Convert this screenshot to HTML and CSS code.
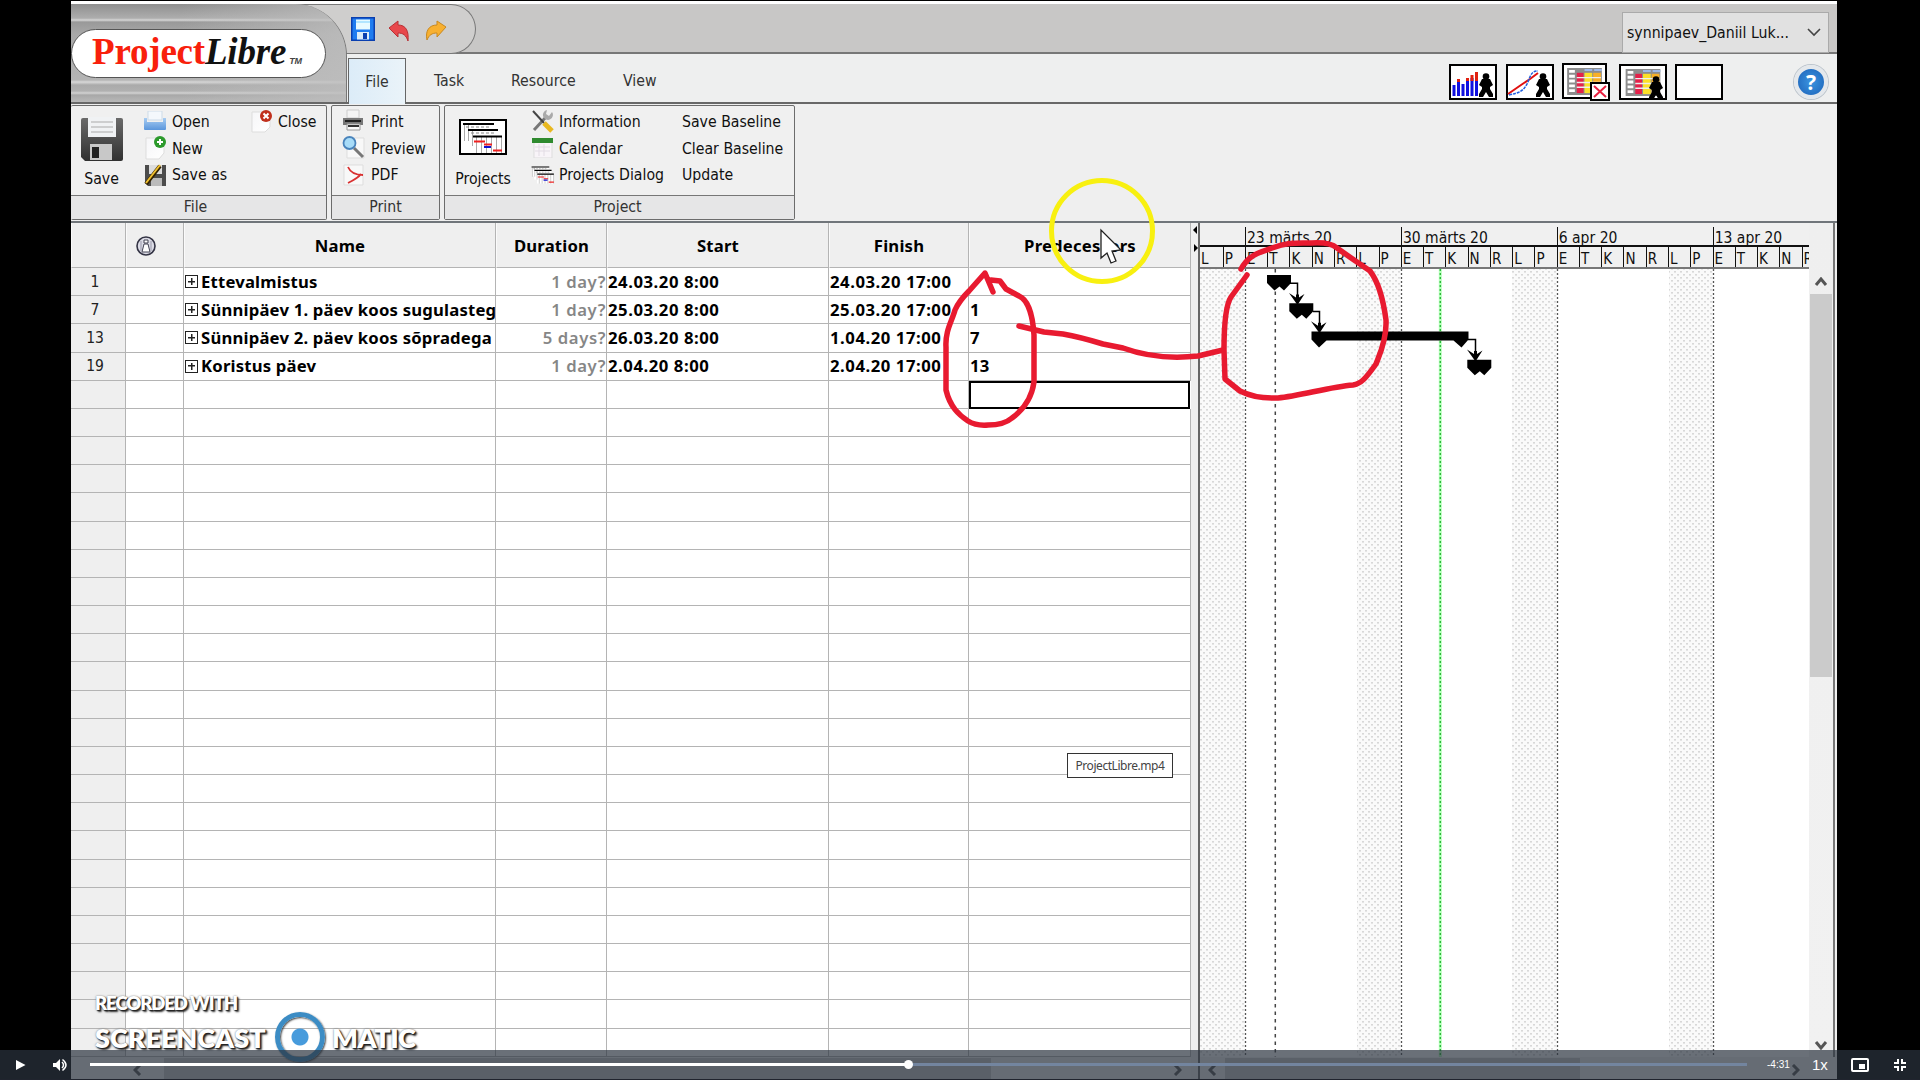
FILE: index.html
```html
<!DOCTYPE html>
<html lang="en">
<head>
<meta charset="utf-8">
<title>ProjectLibre.mp4</title>
<link rel="stylesheet" href="styles.css">
</head>
<body>
<svg width="0" height="0" class="defs">
  <defs>
    <linearGradient id="blue" x2="0" y2="1"><stop offset="0" stop-color="#a9cdf2"/><stop offset="1" stop-color="#5b96dc"/></linearGradient>
    <linearGradient id="dark" x2="0" y2="1"><stop offset="0" stop-color="#6a6a6a"/><stop offset="1" stop-color="#303030"/></linearGradient>
    <linearGradient id="paper" x2="1" y2="1"><stop offset="0" stop-color="#f6f6f8"/><stop offset="1" stop-color="#fff"/></linearGradient>
    <pattern id="dots" width="6" height="6" patternUnits="userSpaceOnUse"><rect width="6" height="6" fill="#fafafa"/><rect width="2" height="1.6" fill="#d8d8d8"/><rect x="3" y="3" width="2" height="1.6" fill="#d8d8d8"/></pattern>
    <symbol id="person" viewBox="0 0 14 24"><circle cx="7" cy="3.5" r="3.3"/><path d="M3 6h8l3 6-3 2v2l3 5v3h-4l-3-5-3 5H0v-3l3-5v-2l-3-2z"/></symbol>
    <symbol id="gantt" viewBox="0 0 48 36"><path d="M4.500 6v15h4v6h5v7h29V18h-4v-6h-4V6z" fill="#fff"/><g fill="none" stroke="#aaa"><path d="M5.500 6v16M9.500 6v16M13.500 12v15M17.500 18v16M22.500 18v16M27.500 18v16M32.500 18v16M37.500 18v16M42.500 18v16"/></g><path d="M4 5h31M9 11h30M14 17.500h29" stroke="#000" stroke-width="2"/><path d="M7 8h25M12 14h24" stroke="#888" stroke-dasharray="3 2"/><path d="M15 22.500h11M25 25.500h8M34 31.500h9" stroke="#f02020" stroke-width="2"/><path d="M25 28h7" stroke="#1010d0" stroke-width="2"/></symbol>
    <symbol id="sheet" viewBox="0 0 36 28"><rect width="36" height="28" fill="#8d8d8d"/><g fill="#fff"><path d="M2 2h6v3H2zM2 7h6v3H2zM2 12h6v3H2zM2 17h6v3H2zM2 22h6v3H2z"/></g><g fill="#9db8e8"><path d="M18 1h8v2h-8zM28 1h8v2h-8z"/></g><path d="M10 5h7v21h-7z" fill="#e5204a"/><path d="M18 5h8v21h-8z" fill="#fce028"/><path d="M27 5h8v21h-8z" fill="#f8b028"/><path d="M10 10h25M10 15h25M10 20h25" stroke="#eee" stroke-width="1.500"/></symbol>
  </defs>
</svg>

<div class="player">
  <main class="app">
    <header class="top">
      <div class="brand">
        <div class="logo"><span class="logo-a">Project</span><span class="logo-b">Libre</span><small>TM</small></div>
      </div>
      <div class="top-right">
        <div class="titlebar">
          <div class="quick">
            <svg width="24" height="24" viewBox="0 0 24 24"><rect width="24" height="24" fill="#0a3fb0"/><rect x="1.500" y="1.500" width="21" height="21" fill="#1f7cf0"/><rect x="5" y="2.500" width="14" height="10" fill="#e8faff"/><path d="M5 5h14" stroke="#7bd0ff"/><rect x="6" y="15" width="12" height="7.500" fill="#dcecf8"/><rect x="12" y="16" width="4" height="6" fill="#0a3fb0"/></svg>
            <svg width="22" height="22" viewBox="0 0 22 22"><path d="M1 8 10 1v4c8 0 11 6 10 16-2-6-5-8-10-8v4z" fill="#e8484c" stroke="#b83034"/></svg>
            <svg width="22" height="22" viewBox="0 0 22 22"><path d="M21 7 12 1v4C4 5 0 11 2 20c2-5 5-7 10-7v4z" fill="#f8b030" stroke="#c88820"/></svg>
          </div>
          <div class="project-select"><span>synnipaev_Daniil Luk...</span>
            <svg width="14" height="9" viewBox="0 0 14 9"><path d="m1 1 6 6 6-6" fill="none" stroke="#444" stroke-width="1.600"/></svg></div>
        </div>
        <nav class="tabs">
          <a class="tab active">File</a><a class="tab task">Task</a><a class="tab resource">Resource</a><a class="tab view">View</a>
          <div class="views">
            <svg width="48" height="36" viewBox="0 0 48 36"><rect x="1" y="1" width="46" height="34" fill="#fff" stroke="#000" stroke-width="2"/><path d="M5 32V21M9.500 32V17M14 32V20M18.500 32V16M23 32V14M27.500 32V12" stroke="#1010e0" stroke-width="3"/><path d="M9.500 18v-3M18.500 17v-3M23 17v-6M27.500 17V8" stroke="#e02010" stroke-width="3"/><use href="#person" x="30" y="9" width="14" height="24"/></svg>
            <svg width="48" height="36" viewBox="0 0 48 36"><rect x="1" y="1" width="46" height="34" fill="#fff" stroke="#000" stroke-width="2"/><path d="m2 30 13-9 9-6 8-6" fill="none" stroke="#e01010" stroke-width="2"/><path d="M3 31c10-2 15-4 19-13 3-9 5-11 10-11" fill="none" stroke="#2060e0" stroke-width="1.500" stroke-dasharray="3 1"/><use href="#person" x="30" y="9" width="14" height="24"/></svg>
            <svg width="48" height="38" viewBox="0 0 48 38"><rect x="1" y="1" width="43" height="34" fill="#fff" stroke="#000" stroke-width="2"/><use href="#sheet" x="5" y="5" width="35" height="27"/><rect x="29" y="20" width="18" height="17" fill="#fff" stroke="#000" stroke-width="2"/><path d="m32 23 12 11m0-11L32 34" stroke="#e82040" stroke-width="2"/></svg>
            <svg width="48" height="36" viewBox="0 0 48 36"><rect x="1" y="1" width="46" height="34" fill="#fff" stroke="#000" stroke-width="2"/><use href="#sheet" x="6" y="5" width="36" height="27"/><use href="#person" x="30" y="12" width="14" height="24"/></svg>
            <svg width="48" height="36" viewBox="0 0 48 36"><rect x="1" y="1" width="46" height="34" fill="#fff" stroke="#000" stroke-width="2"/></svg>
          </div>
          <div class="help">?</div>
        </nav>
      </div>
    </header>

    <section class="ribbon">
      <div class="group g-file">
        <div class="tools">
          <div class="big"><svg width="42" height="44" viewBox="0 0 42 44"><path d="M2 1h38q2 0 2 2v39q0 2-2 2H4l-4-4V3q0-2 2-2z" fill="url(#dark)"/><rect x="7" y="0" width="28" height="20" fill="#f0f2f4"/><path d="M10 5h22M10 10h22M10 15h22" stroke="#aaa"/><rect x="9" y="27" width="22" height="16" fill="#c8c8c8"/><rect x="11" y="30" width="7" height="11" fill="#222"/></svg><span>Save</span></div>
          <div class="list">
            <div><svg width="24" height="20" viewBox="0 0 24 20"><path d="M5 0h14v9H5z" fill="#f4f8fc" stroke="#cddbe8"/><path d="M1 7h3v4h16V7h3v11q0 1-1 1H2q-1 0-1-1z" fill="url(#blue)"/></svg>Open</div>
            <div><svg width="24" height="24" viewBox="0 0 24 24"><path d="M3 2h18v15l-5 6H3z" fill="url(#paper)" stroke="#ddd"/><circle cx="17" cy="6" r="6" fill="#2c9a2c"/><path d="M17 3v6m-3-3h6" stroke="#fff" stroke-width="2"/></svg>New</div>
            <div><svg width="24" height="22" viewBox="0 0 24 22"><path d="M2 1h21v21H5l-3-3z" fill="#4c4c4c"/><path d="M6 1h13v9H6z" fill="#ddd"/><path d="M8 14h11v8H8z" fill="#bbb"/><path d="M3 20 17 2" stroke="#332200" stroke-width="4"/><path d="M3 19 17 1" stroke="#f0c030" stroke-width="2"/></svg>Save as</div>
          </div>
          <div class="list close"><div><svg width="24" height="24" viewBox="0 0 24 24"><path d="M3 3h18v15l-5 5H3z" fill="url(#paper)" stroke="#ddd"/><circle cx="17" cy="7" r="6" fill="#c0301c"/><path d="m14.500 4.500 5 5m0-5-5 5" stroke="#fff" stroke-width="2"/></svg>Close</div></div>
        </div>
        <div class="caption">File</div>
      </div>
      <div class="group g-print">
        <div class="tools">
          <div class="list">
            <div><svg width="24" height="24" viewBox="0 0 24 24"><path d="M5 1h12v8H5z" fill="#f4f4f4" stroke="#ccc"/><path d="M1 9h20v7H1z" fill="#777"/><path d="M3 11h16v2H3z" fill="#222"/><path d="M5 15h13v6H5z" fill="#fafafa" stroke="#999"/><path d="M6 17h11" stroke="#333" stroke-width="2"/></svg>Print</div>
            <div><svg width="24" height="24" viewBox="0 0 24 24"><path d="M5 2h17v20H5z" fill="#f8f8f8" stroke="#ddd"/><path d="m12 12 9 9" stroke="#777" stroke-width="3"/><circle cx="7.500" cy="7" r="6" fill="#a8dcf8" stroke="#4a84bc" stroke-width="1.800"/></svg>Preview</div>
            <div><svg width="24" height="24" viewBox="0 0 24 24"><path d="M2 2h19v20H2z" fill="#f8f8f8" stroke="#ddd"/><path d="M6 4c3 7 9 8 15 8M6 20c6-3 11-6 13-9" fill="none" stroke="#d83030" stroke-width="1.800"/></svg>PDF</div>
          </div>
        </div>
        <div class="caption">Print</div>
      </div>
      <div class="group g-project">
        <div class="tools">
          <div class="big"><svg width="48" height="36" viewBox="0 0 48 36"><rect x="1" y="1" width="46" height="34" fill="#fff" stroke="#000" stroke-width="2"/><use href="#gantt" width="48" height="36"/></svg><span>Projects</span></div>
          <div class="list">
            <div><svg width="24" height="24" viewBox="0 0 24 24"><path d="M3 21 15 8" stroke="#777" stroke-width="3"/><path d="M21 3a5 5 0 1 1-5-2l-1 4 3 2z" fill="#aaa"/><path d="m2 2 11 12" stroke="#444" stroke-width="2"/><path d="m13 14 8 8" stroke="#e8b820" stroke-width="5"/></svg>Information</div>
            <div><svg width="24" height="20" viewBox="0 0 24 20"><path d="M3 3h18v17H3z" fill="#f8f4f8" stroke="#ddd"/><path d="M1 0h21v5H1z" fill="#2f8a2f"/><path d="M4 9h15M4 13h15M8 6v12M13 6v12" stroke="#e2dce4"/></svg>Calendar</div>
            <div><svg width="24" height="20" viewBox="3 2 42 34"><use href="#gantt" width="48" height="36"/></svg>Projects Dialog</div>
          </div>
          <div class="list plain"><div>Save Baseline</div><div>Clear Baseline</div><div>Update</div></div>
        </div>
        <div class="caption">Project</div>
      </div>
    </section>

    <section class="work">
      <div class="sheet-pane">
        <div class="grid" id="grid"></div>
        <div class="hscroll left"><svg width="9" height="12" viewBox="0 0 9 12"><path d="M7 1 2 6l5 5"/></svg><div class="track"><i></i></div><svg width="9" height="12" viewBox="0 0 9 12"><path d="m2 1 5 5-5 5"/></svg></div>
      </div>
      <div class="splitter"><i class="to-left"></i><i class="to-right"></i></div>
      <div class="gantt-pane">
        <div class="gantt-row">
          <div class="timeline">
            <div class="weeks"><span></span><span>23 märts 20</span><span>30 märts 20</span><span>6 apr 20</span><span>13 apr 20</span></div>
            <div class="days" id="days"></div>
            <svg class="chart" width="610" height="789" viewBox="1200 268 610 789">
              <g fill="url(#dots)"><path d="M1199 268h46v789h-46zM1357 268h44v789h-44zM1512 268h45v789h-45zM1669 268h44v789h-44z"/></g>
              <g stroke="#555" stroke-width="1.300" stroke-dasharray="2 2"><path d="M1245.500 268v789M1401.500 268v789M1557.500 268v789M1713.500 268v789"/></g>
              <path d="M1275.300 268v789" stroke="#444" stroke-width="1.500" stroke-dasharray="3.500 4"/>
              <path d="M1440.300 268v789" stroke="#b4ffb8" stroke-width="3"/><path d="M1440.300 268v789" stroke="#2bb83a" stroke-width="1.400" stroke-dasharray="2 2"/>
              <path d="M1267 274h24v8l-7 7.500-4.500-4-5 4-7.500-7.500zM1289.300 302.300h24v8l-7 7.500-4.500-4-5 4-7.500-7.500zM1311.500 330.500h157v8l-7 8-8-7h-127l-7.500 7-7.500-8zM1467.300 358.700h24v8l-7 7.500-4.500-4-5 4-7.500-7.500z"/>
              <g fill="none" stroke="#000" stroke-width="1.500"><path d="M1290 282.300h7.500v18M1313 310.500h6.500v18M1468 338.500h7.500v18"/></g>
              <path id="tip" d="m1289 292 8.500 12 7-11-5.500 3.500v-3h-3v3z"/><use href="#tip" x="22" y="28.200"/><use href="#tip" x="178" y="56.400"/>
            </svg>
          </div>
          <div class="vscroll"><svg width="14" height="10" viewBox="0 0 14 10"><path d="m2 8 5-6 5 6"/></svg><i></i><svg width="14" height="10" viewBox="0 0 14 10"><path d="m2 2 5 6 5-6"/></svg></div>
        </div>
        <div class="hscroll right"><svg width="9" height="12" viewBox="0 0 9 12"><path d="M7 1 2 6l5 5"/></svg><div class="track"><i></i></div><svg width="9" height="12" viewBox="0 0 9 12"><path d="m2 1 5 5-5 5"/></svg></div>
      </div>
    </section>
  </main>

  <svg class="ink" width="1920" height="1080" viewBox="0 0 1920 1080">
    <circle cx="1102" cy="231" r="50.500" fill="none" stroke="#f8f010" stroke-width="5"/>
    <g fill="none" stroke="#e81a30" stroke-width="5.500" stroke-linecap="round" stroke-linejoin="round">
      <path d="M993 292 985 273 969 291Q959 301 955 310C952 321 945 331 946 347V390C950 407 959 415 968 421Q976 426 988 425 1004 425 1012 418 1031 404 1034 382V335C1033 319 1029 300 1019 296L1006 289 1000 281 991 280"/>
      <path d="M1019 326 1044 332 1063 334Q1080 337 1103 344L1123 348C1145 356 1170 359 1198 356L1223 350"/>
      <path d="M1241 269C1250 253 1262 252 1272 248 1288 242 1296 243 1312 243Q1330 242 1337 248C1348 256 1360 264 1370 271 1380 284 1384 305 1386 320 1387 340 1379 356 1376 364 1366 378 1361 384 1353 385 1329 387 1300 396 1278 398Q1256 399 1240 391L1225 379 1224 350C1224 328 1225 306 1231 297L1247 275"/>
    </g>
    <path d="M1101 230v28l6-5 4 10 5-2-4-10 9-1z" fill="#fff" stroke="#222" stroke-width="1.300"/>
  </svg>

  <div class="watermark">
    <div class="wm-small">RECORDED WITH</div>
    <div class="wm-big"><span class="wm-a">SCREENCAST</span><i></i><span class="wm-b">MATIC</span></div>
  </div>
  <div class="tooltip">ProjectLibre.mp4</div>

  <footer class="controls">
    <svg class="play" width="10" height="12" viewBox="0 0 10 12"><path d="M0 1 9.500 6 0 11z" fill="#fff"/></svg>
    <svg class="volume" width="15" height="14" viewBox="0 0 15 14"><path d="M0 5h3l4-4v12L3 9H0z" fill="#fff"/><path d="M9 4q3 3 0 6M9.500 1.500q7 5.500 0 11" fill="none" stroke="#fff" stroke-width="1.500"/></svg>
    <div class="progress"><div class="played"></div></div>
    <span class="remaining">-4:31</span><span class="rate">1x</span>
    <svg class="pip" width="18" height="14" viewBox="0 0 18 14"><rect x="1" y="1" width="16" height="12" rx="1" fill="none" stroke="#fff" stroke-width="2"/><rect x="8" y="6" width="6" height="5" fill="#fff"/></svg>
    <svg class="full" width="12" height="12" viewBox="0 0 12 12"><path d="M0 4h4V0M8 0v4h4M0 8h4v4M12 8H8v4" fill="none" stroke="#fff" stroke-width="2"/></svg>
  </footer>
</div>
<script src="app.js"></script>
</body>
</html>
```
FILE: styles.css
```css
* { box-sizing: border-box; }
body { margin: 0; background: #000; font-family: "DejaVu Sans Condensed", "DejaVu Sans", sans-serif; font-stretch: condensed; font-size: 15.7px; color: #111; overflow: hidden; }
svg { display: block; flex: none; }
.defs { position: absolute; }
.player { position: relative; width: 1920px; height: 1080px; padding: 1px 83px 0 71px; overflow: hidden; }
.app { display: flex; flex-direction: column; width: 1766px; height: 1079px; background: #efefef; overflow: hidden; border-top: 3px solid #fff; }

.top { display: flex; flex: none; height: 100px; border-bottom: 2px solid #686868; background: #eeefef; }
.brand { position: relative; z-index: 2; width: 276px; padding: 25px 0 0 0; overflow: hidden; border-radius: 0 52px 0 0 / 0 52px 0 0; border-right: 1px solid #777;
  background: linear-gradient(#8f8f8f 0, #adadad 14px, #bdbdbd 15px, #d8d8d8 16px, #999 18px, #a8a8a8 30px, #b4b4b4 76px, #d8d8d8 78px, #aaa 81px, #b0b0b0 87px, #d2d2d2 89px, #a8a8a8 91px, #bdbdbd 100px); }
.brand::after { content: ""; position: absolute; inset: 0; background: linear-gradient(90deg, transparent 40%, rgba(190,190,190,.8)); z-index: 0; }
.logo { position: relative; z-index: 1; width: 255px; height: 49px; padding: 0 0 0 20px; background: #fff; border: 1.5px solid #555; border-radius: 25px; white-space: nowrap; font: bold 37px/44px "Liberation Serif", serif; letter-spacing: -.2px; display: flex; }
.logo-a { color: #f8200c; }
.logo-b { font-style: italic; }
.logo small { font: italic bold 9px/62px "Liberation Sans", sans-serif; color: #444; margin-left: 3px; }
.top-right { flex: 1; display: flex; flex-direction: column; background: #eeefef; margin-left: -68px; }
.titlebar { height: 50px; display: flex; justify-content: space-between; background: #c8c7c6; border-bottom: 2px solid #777; padding-right: 8px; }
.quick { width: 197px; height: 50px; display: flex; gap: 13px; align-items: flex-start; padding: 12px 0 0 72px; background: #cfcecd; border: 1px solid #777; border-left: 0; border-radius: 0 25px 25px 0; }
.quick svg + svg { margin-top: 3px; }
.quick svg:last-child { margin-left: 2px; }
.project-select { width: 207px; height: 41px; margin-top: 8px; display: flex; align-items: center; justify-content: space-between; padding: 0 7px 0 4px; background: #e1e1e1; border: 1px solid #aaa; }
.tabs { flex: 1; display: flex; align-items: center; padding-left: 69px; color: #333; }
.tab { display: block; line-height: 50px; padding-top: 2px; }
.tab.active { width: 58px; height: 46px; margin: 1px 0 -1px; padding: 0; line-height: 45px; text-align: center; background: linear-gradient(90deg, #dcecf8, #eaf3f9); border: 1px solid #666; border-bottom: 0; }
.task { margin-left: 28px; width: 77px; }
.resource { width: 112px; }
.view { flex: 1; }
.views { display: flex; gap: 8.4px; align-items: center; padding-top: 4px; }
.help { width: 34px; height: 34px; margin: 3px 9px 0 71px; border-radius: 50%; background: radial-gradient(#3a94e0, #1c62b8); border: 4px solid #e4e8ec; box-shadow: 0 0 0 1px #bcc4cc; color: #fff; font: bold 21px/26px "Noto Sans", sans-serif; text-align: center; }

.ribbon { flex: none; height: 119px; display: flex; gap: 4px; padding-top: 1px; border-bottom: 2px solid #70757a; }
.group { height: 115px; display: flex; flex-direction: column; border: 1.5px solid #6c6c6c; border-radius: 2px; background: #f0f0f0; white-space: nowrap; }
.g-file { width: 256px; border-left: 0; }
.g-print { width: 109px; }
.g-project { width: 351px; }
.tools { height: 89px; display: flex; padding-top: 2px; }
.big { flex: none; display: flex; flex-direction: column; align-items: center; }
.big span { margin-top: auto; margin-bottom: 7px; line-height: 18px; }
.big svg { margin-top: 9px; }
.g-file .big { width: 61px; }
.g-project .big { width: 60px; margin-left: 8px; }
.g-project .big svg { margin-top: 11px; }
.list { flex: none; }
.list > div { height: 26.7px; display: flex; align-items: center; gap: 5px; }
.g-file .list { padding-left: 11px; width: 117px; }
.g-file .list.close { width: 78px; padding-left: 0; }
.g-print .list { padding-left: 10px; }
.g-project .list { padding-left: 18px; width: 153px; }
.g-project .list > div { gap: 4px; }
.g-project .list.plain { width: 120px; padding-left: 16px; }
.caption { flex: 1; text-align: center; line-height: 21px; border-top: 1.5px solid #777; background: #e6e6e7; color: #333; }
.g-file .caption { padding-right: 6px; }
.g-project .caption { padding-right: 4px; }

.work { flex: 1; display: flex; min-height: 0; }
.sheet-pane { width: 1120px; display: flex; flex-direction: column; }
.grid { height: 834px; display: grid; grid-template-columns: 55px 58px 312px 111px 222px 140px 222px; grid-template-rows: 45px repeat(28, 28.18px); background: #fff; }
.cell { display: flex; align-items: center; overflow: hidden; white-space: nowrap; border-right: 1.5px solid #b4b4b4; border-bottom: 1.5px solid #b4b4b4; font: bold 16.7px/22px "Noto Sans", sans-serif; letter-spacing: .19px; color: #000; padding-left: 1px; }
.cell.date { letter-spacing: .55px; }
.cell.head { justify-content: center; background: #efefef; border-left: 1px solid #fafafa; padding: 2px 0 0; }
.cell.head svg { margin: 0 18px 0 0; }
.cell.num { justify-content: center; background: #efefef; font: 15.5px "DejaVu Sans Condensed", "DejaVu Sans", sans-serif; color: #222; padding: 0 6px 0 0; letter-spacing: 0; }
.cell.dur { justify-content: flex-end; font-weight: 600; letter-spacing: .6px; color: #868686; padding-right: 0; }
.cell.selected { border: 2px solid #000; margin: 0 1px 0 0; }
.plus { width: 13px; height: 13px; margin-right: 3px; flex: none; border: 1.5px solid #222; background: linear-gradient(#222, #222) center / 7px 1.5px no-repeat, linear-gradient(#222, #222) center / 1.5px 7px no-repeat; }
.hscroll { flex: 1; display: flex; align-items: flex-start; padding-top: 7px; background: #f0f0f0; }
.hscroll svg path, .vscroll svg path { fill: none; stroke: #555; stroke-width: 3; }
.hscroll .track { flex: 1; margin-top: -6px; height: 24px; }
.hscroll .track i { display: block; height: 24px; background: #cacaca; }
.hscroll.left { padding-left: 62px; padding-right: 9px; }
.left .track { margin-left: 22px; }
.left .track i { width: 827px; }
.splitter { width: 9px; border-right: 2px solid #666; background: #efefef; padding-top: 3px; }
.splitter i { display: block; width: 0; height: 0; border: 4px solid transparent; }
.splitter .to-left { border-right-color: #000; margin-left: -2px; }
.splitter .to-right { border-left-color: #000; margin: 10px 0 0 3px; }

.gantt-pane { width: 637px; display: flex; flex-direction: column; }
.gantt-row { display: flex; height: 834px; border-right: 2px solid #777; margin-right: 2px; }
.timeline { width: 609px; overflow: hidden; display: flex; flex-direction: column; background: #fff; }
.weeks { flex: none; height: 24px; display: grid; grid-template-columns: 45px repeat(4, 155.9px); background: #f0f0f0; border-bottom: 2px solid #111; padding-top: 4px; }
.weeks span { padding-left: 1px; line-height: 22px; font-size: 15.5px; white-space: nowrap; }
.weeks span + span { border-left: 1.5px solid #111; }
.days { flex: none; height: 22px; display: grid; grid-template-columns: 22.7px repeat(28, 22.27px); background: #f0f0f0; border-bottom: 2px solid #777; overflow: hidden; }
.days span { padding-left: 1px; font-size: 15px; line-height: 25px; }
.days span + span { border-left: 1.5px solid #111; }
.vscroll { width: 24px; display: flex; flex-direction: column; align-items: center; padding: 54px 1px 7px; background: linear-gradient(#efefef, #f1f1f1); }
.vscroll i { width: 22px; height: 383px; background: #cbcbcb; margin: 7px 0 auto; }
.hscroll.right { padding-left: 8px; padding-right: 37px; }
.right .track { margin-left: 8px; }
.right .track i { width: 355px; }

.ink { position: absolute; left: 0; top: 0; }
.watermark { position: absolute; left: 95px; top: 990px; color: #fff; font-family: Lato, sans-serif; font-weight: 800; text-shadow: 1px 1px 1px #222, 2px 2px 2px #333, 0 0 2px #777; }
.wm-small { font-size: 18.5px; line-height: 26px; letter-spacing: -1.05px; }
.wm-big { display: flex; align-items: center; height: 50px; margin-top: -4px; font-size: 27px; }
.wm-a { width: 180px; }
.wm-b { margin-left: 7px; letter-spacing: -.5px; }
.wm-big i { width: 50px; height: 50px; border: 5px solid #3c8cc4; border-radius: 50%; background: radial-gradient(circle, #479bdc 8px, transparent 9px); box-shadow: 1px 1px 2px #444, inset 1px 1px 2px #444; }
.tooltip { position: absolute; left: 1067px; top: 753px; width: 106px; height: 25px; border: 1.5px solid #333; background: #fff; color: #444; font: 12px/24px "Noto Sans", sans-serif; letter-spacing: -.45px; text-align: center; }
.controls { position: absolute; left: 0; top: 1050px; width: 1920px; height: 30px; display: flex; align-items: center; background: rgba(43,51,63,.7); border-bottom: 1px solid #20242e; color: #fff; }
.play { margin-left: 16px; }
.volume { margin-left: 27px; }
.progress { width: 1657px; height: 3px; margin-left: 22px; background: #73859f; }
.played { position: relative; width: 819px; height: 3px; background: #fff; }
.played::after { content: ""; position: absolute; right: -4px; top: -3px; width: 9px; height: 9px; border-radius: 50%; background: #fff; }
.remaining { margin-left: 20px; width: 45px; font: 10px "Liberation Sans", sans-serif; }
.rate { width: 39px; font: 15px "Liberation Sans", sans-serif; }
.full { margin-left: 25px; }
```
FILE: app.js
```js
const heads = ['', 'i', 'Name', 'Duration', 'Start', 'Finish', 'Predecessors'];
const tasks = [
  ['1', '', 'Ettevalmistus', '1 day?', '24.03.20 8:00', '24.03.20 17:00', ''],
  ['7', '', 'Sünnipäev 1. päev koos sugulasteg', '1 day?', '25.03.20 8:00', '25.03.20 17:00', '1'],
  ['13', '', 'Sünnipäev 2. päev koos sõpradega', '5 days?', '26.03.20 8:00', '1.04.20 17:00', '7'],
  ['19', '', 'Koristus päev', '1 day?', '2.04.20 8:00', '2.04.20 17:00', '13']
];
const info = '<svg width="22" height="22" viewBox="0 0 22 22"><circle cx="11" cy="11" r="9" fill="#dcdce6" stroke="#334" stroke-width="1.600"/><path d="M9 9h4l2 8H7zM9 5h4v3H9z" fill="#fff" stroke="#445"/><path d="M6 6v10M16 6v10" stroke="#99a"/></svg>';
let html = heads.map((h, i) => `<div class="cell head">${i === 1 ? info : h}</div>`).join('');
for (let r = 0; r < 28; r++) {
  for (let c = 0; c < 7; c++) {
    const text = tasks[r] ? tasks[r][c] : '';
    const kind = c === 0 ? ' num' : c === 3 ? ' dur' : c === 4 || c === 5 ? ' date' : r === 4 && c === 6 ? ' selected' : '';
    html += `<div class="cell${kind}">${c === 2 && text ? '<i class="plus"></i>' : ''}${text}</div>`;
  }
}
document.getElementById('grid').innerHTML = html;
document.getElementById('days').innerHTML = [...'LPETKNRLPETKNRLPETKNRLPETKNR'].map(d => `<span>${d}</span>`).join('');
```
